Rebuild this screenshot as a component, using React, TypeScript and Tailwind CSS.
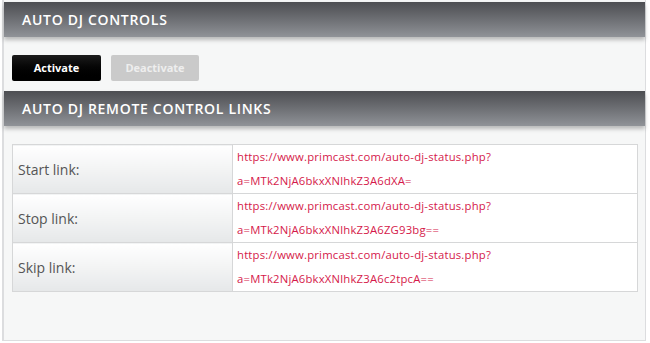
const links = [
  { label: 'Start link:', url: 'https://www.primcast.com/auto-dj-status.php?', code: 'a=MTk2NjA6bkxXNlhkZ3A6dXA=' },
  { label: 'Stop link:', url: 'https://www.primcast.com/auto-dj-status.php?', code: 'a=MTk2NjA6bkxXNlhkZ3A6ZG93bg==' },
  { label: 'Skip link:', url: 'https://www.primcast.com/auto-dj-status.php?', code: 'a=MTk2NjA6bkxXNlhkZ3A6c2tpcA==' },
]

function SectionHeader({ title }: { title: string }) {
  return (
    <div className="h-[35px] flex items-center pl-[18px] bg-gradient-to-b from-[#4d4e52] to-[#909398] shadow-[0_3px_4px_rgba(0,0,0,0.25)]">
      <h2 className="text-white text-[14px] font-semibold tracking-[0.7px] uppercase">{title}</h2>
    </div>
  )
}

export default function App() {
  return (
    <div className="w-[650px] h-[343px] bg-white font-['Open_Sans',sans-serif]">
      <div className="ml-[2px] mr-[4px] pt-[2px] h-[341px] bg-[#f6f7f7] border-l-2 border-r border-b border-[#dcdddf]">
        <SectionHeader title="Auto DJ Controls" />

        <div className="flex gap-[10px] pl-[8px] pt-[18px] pb-[10px]">
          <button className="w-[89px] h-[26px] rounded-[2px] bg-gradient-to-b from-[#1c1c1c] to-black text-white text-[11px] font-bold">
            Activate
          </button>
          <button className="w-[88px] h-[26px] rounded-[2px] bg-[#cacaca] text-[#eeeeee] text-[11px] font-bold">
            Deactivate
          </button>
        </div>

        <SectionHeader title="Auto DJ Remote Control Links" />

        <div className="pl-[8px] pr-[7px] pt-[18px]">
          <table className="w-full border-collapse border border-[#d6d7d8] bg-white">
            <tbody>
              {links.map((l) => (
                <tr key={l.label} className="h-[49px]">
                  <td className="w-[220px] border border-[#d6d7d8] pl-[5px] text-[14px] text-[#555] bg-gradient-to-b from-white to-[#e6e8e9]">
                    {l.label}
                  </td>
                  <td className="border border-[#d6d7d8] pl-[4px] text-[11.3px] tracking-[0.2px] leading-[24px] text-[#d5194a] align-middle">
                    <div>{l.url}</div>
                    <div>{l.code}</div>
                  </td>
                </tr>
              ))}
            </tbody>
          </table>
        </div>
      </div>
    </div>
  )
}
